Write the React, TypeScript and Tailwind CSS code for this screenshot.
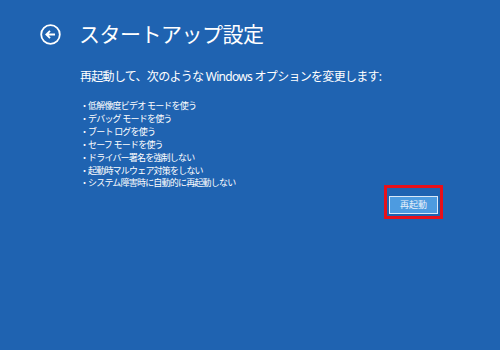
export default function App() {
  const options = [
    "低解像度ビデオ モードを使う",
    "デバッグ モードを使う",
    "ブート ログを使う",
    "セーフ モードを使う",
    "ドライバー署名を強制しない",
    "起動時マルウェア対策をしない",
    "システム障害時に自動的に再起動しない",
  ];

  return (
    <div
      className="w-[500px] h-[350px] bg-[#1f63b1] text-white overflow-hidden flex flex-col"
      style={{ fontFamily: '"Noto Sans", "Noto Sans CJK JP", sans-serif' }}
    >
      {/* Header */}
      <div className="flex items-center gap-[18px] pl-[40px] pt-[20px]">
        <svg width="21" height="21" viewBox="0 0 21 21" fill="none">
          <circle cx="10.5" cy="10.5" r="9.3" stroke="white" strokeWidth="1.8" />
          <path d="M15 10.5H6.5M10 6.8L6.3 10.5L10 14.2" stroke="white" strokeWidth="1.8" />
        </svg>
        <h1 className="text-[21px] leading-[28px] tracking-[-0.5px] font-normal">スタートアップ設定</h1>
      </div>

      {/* Body */}
      <div className="pl-[80px] pt-[21px]">
        <p className="text-[12px] leading-[16px] tracking-[-0.7px]">
          再起動して、次のような Windows オプションを変更します:
        </p>
        <ul className="mt-[15px] flex flex-col text-[9px] leading-[12.9px] tracking-[-0.8px]">
          {options.map((o) => (
            <li key={o} className="flex">
              <span className="w-[8px]">・</span>
              <span>{o}</span>
            </li>
          ))}
        </ul>

        {/* Restart button */}
        <div className="flex justify-end pr-[57px] -mt-[5px]">
          <div className="border-[3px] border-[#e8101a] p-[2px]">
            <button className="w-[49px] h-[18px] bg-[#4d9be0] border border-[#dce9f7] text-[9px] leading-none text-[#eaf2fb]">
              再起動
            </button>
          </div>
        </div>
      </div>
    </div>
  );
}
